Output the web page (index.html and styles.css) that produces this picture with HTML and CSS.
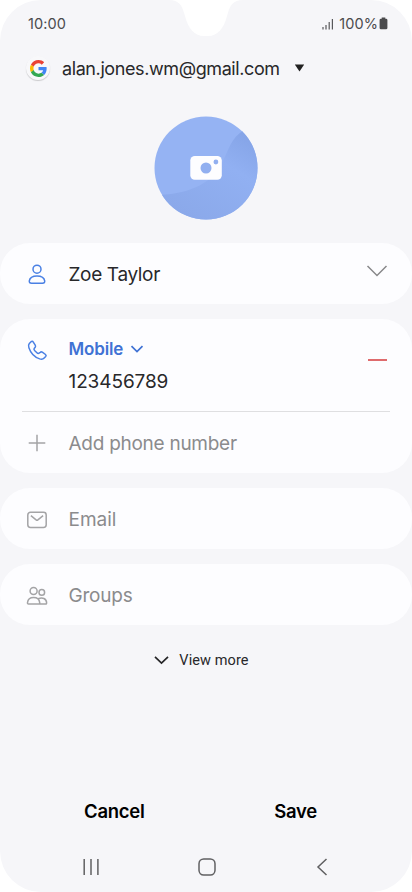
FILE: index.html
```
<!DOCTYPE html>
<html lang="en">
<head>
    <meta charset="UTF-8">
    <meta name="viewport" content="width=device-width, initial-scale=1.0">
    <title>Edit contact</title>
    <link rel="stylesheet" href="styles.css">
</head>
<body>
    <div class="screen">
        <svg class="notch" width="80" height="38" viewBox="0 0 80 38">
            <path d="M3 0C13 0 16 5 19 16C22 28 28 36 38 36H42C52 36 58 28 61 16C64 5 67 0 77 0Z" fill="#fff"/>
        </svg>

        <header class="status-bar">
            <span class="time">10:00</span>
            <div class="status-right">
                <svg width="12" height="12" viewBox="0 0 12 12" stroke="#58585a" stroke-width="1.2">
                    <path d="M1 9V11.5M4 7V11.5M7.2 4V11.5M10.4 1V11.5"/>
                </svg>
                <span class="percent">100%</span>
                <svg width="9" height="13" viewBox="0 0 9 13" fill="#4b4b4d">
                    <path d="M2.7 0.5h3.6v1.2h.7a1.4 1.4 0 0 1 1.4 1.4v7.8a1.4 1.4 0 0 1-1.4 1.4H2A1.4 1.4 0 0 1 .6 10.9V3.1A1.4 1.4 0 0 1 2 1.700h.7z"/>
                </svg>
            </div>
        </header>

        <div class="account">
            <span class="google">
                <svg width="17" height="17" viewBox="0 0 48 48">
                    <path fill="#ea4335" d="M24 9.500c3.540 0 6.710 1.220 9.210 3.600l6.850-6.850C35.900 2.380 30.470 0 24 0 14.620 0 6.510 5.380 2.560 13.220l7.980 6.190C12.430 13.720 17.740 9.500 24 9.500z"/>
                    <path fill="#4285f4" d="M46.980 24.550c0-1.570-.15-3.090-.38-4.550H24v9.020h12.940c-.58 2.960-2.260 5.480-4.780 7.180l7.730 6c4.510-4.180 7.090-10.360 7.090-17.650z"/>
                    <path fill="#fbbc05" d="M10.530 28.590A14.500 14.500 0 0 1 9.770 24c0-1.600.27-3.140.76-4.590l-7.980-6.190A24 24 0 0 0 0 24c0 3.880.92 7.540 2.560 10.780z"/>
                    <path fill="#34a853" d="M24 48c6.480 0 11.930-2.130 15.890-5.810l-7.730-6c-2.150 1.450-4.920 2.300-8.160 2.300-6.260 0-11.570-4.220-13.470-9.910l-7.980 6.190C6.510 42.620 14.620 48 24 48z"/>
                </svg>
            </span>
            <span class="email">alan.jones.wm@gmail.com</span>
            <svg width="11" height="8" viewBox="0 0 11 8"><path d="M.8.5H10.200L5.500 7.500z" fill="#222"/></svg>
        </div>

        <div class="photo">
            <svg width="104" height="104" viewBox="0 0 104 104">
                <defs>
                    <clipPath id="round"><circle cx="52" cy="52" r="51.500"/></clipPath>
                    <linearGradient id="wave" x1="1" y1="0" x2=".4" y2="1">
                        <stop offset="0" stop-color="#86a5e8"/>
                        <stop offset=".2" stop-color="#86a5e8"/>
                        <stop offset=".48" stop-color="#91b0f2"/>
                        <stop offset="1" stop-color="#8ba9ea"/>
                    </linearGradient>
                </defs>
                <g clip-path="url(#round)">
                    <rect width="104" height="104" fill="#95b3f3"/>
                    <path d="M0 79C32 79 57 69 68 47C75 33 77 22 90 14L104 0V104H0Z" fill="url(#wave)"/>
                </g>
                <rect x="36.300" y="40" width="31.500" height="23.700" rx="4.500" fill="#fdfdff"/>
                <circle cx="52" cy="52" r="5.500" fill="#91aff0"/>
                <circle cx="61.900" cy="46" r="2.400" fill="#91aff0"/>
            </svg>
        </div>

        <main class="cards">
            <section class="card row">
                <svg class="icon blue" viewBox="0 0 24 24">
                    <circle cx="12" cy="7.200" r="4"/>
                    <path d="M6.500 21.200Q4 21.200 4.300 18.900C4.900 15.300 8 14 12 14S19.100 15.300 19.700 18.900Q20 21.200 17.500 21.200Z"/>
                </svg>
                <span class="value name">Zoe Taylor</span>
                <svg class="expand" width="22" height="14" viewBox="0 0 22 14"><path d="M1.500 2L11 11.500L20.500 2" fill="none" stroke="#88888a" stroke-width="1.500"/></svg>
            </section>

            <section class="card phone-card">
                <div class="phone">
                    <svg class="icon blue" viewBox="0 0 24 24">
                        <path d="M6.100 3.700L4.300 5.500Q3 7 3.900 9.700C5.800 15.400 9.700 19.200 14.700 20.900Q17.600 21.700 19.200 20L20.700 18.500Q21.600 17.500 20.500 16.500L17.300 14.200Q16.200 13.500 15.200 14.300L13.700 15.400Q12.800 15.700 11.900 14.800L9.600 12.400Q8.600 11.300 9.200 10.400L10.200 9.200Q10.900 8.200 10.200 7.100L8.300 4.100Q7.300 2.700 6.100 3.700Z"/>
                    </svg>
                    <div class="phone-info">
                        <div class="label"><span>Mobile</span><svg width="14" height="10" viewBox="0 0 14 10"><path d="M1.500 2.200L7 7.600L12.500 2.200" fill="none" stroke="#3f72d4" stroke-width="1.700"/></svg></div>
                        <div class="value number">123456789</div>
                    </div>
                    <span class="minus"></span>
                </div>
                <div class="row add">
                    <svg class="icon gray" viewBox="0 0 24 24"><path d="M12 3.700V20.300M3.700 12H20.300"/></svg>
                    <span class="value muted add-text">Add phone number</span>
                </div>
            </section>

            <section class="card row">
                <svg class="icon gray" viewBox="0 0 24 24">
                    <rect x="2.800" y="5.300" width="18.400" height="15.200" rx="2.700"/>
                    <path d="M5.900 8.700L11.100 12.800Q12 13.500 12.900 12.800L18.100 8.700"/>
                </svg>
                <span class="value muted email-text">Email</span>
            </section>

            <section class="card row">
                <svg class="icon gray" viewBox="0 0 24 24">
                    <circle cx="8.600" cy="8" r="3.500"/>
                    <circle cx="16.800" cy="9.400" r="2.800"/>
                    <path d="M3.500 21Q2.300 21 2.500 19.600C2.900 15.900 5.200 14.500 8.600 14.500S14.300 15.900 14.700 19.600Q14.900 21 13.700 21ZM13.300 15.700C17.400 13.900 21.500 15.500 21.600 19.700Q21.700 21 20.600 21H13.700"/>
                </svg>
                <span class="value muted groups-text">Groups</span>
            </section>
        </main>

        <div class="view-more">
            <svg width="15" height="10" viewBox="0 0 15 10"><path d="M1 1.800L7.500 8L14 1.800" fill="none" stroke="#252527" stroke-width="1.700"/></svg>
            <span>View more</span>
        </div>

        <div class="actions">
            <span>Cancel</span>
            <span>Save</span>
        </div>

        <nav class="nav-bar">
            <svg width="18" height="18" viewBox="0 0 18 18"><path d="M2.200 1V17M9 1V17M15.900 1V17"/></svg>
            <svg width="18" height="18" viewBox="0 0 18 18"><rect x="1" y="1" width="16" height="16" rx="4.700"/></svg>
            <svg width="18" height="18" viewBox="0 0 18 18"><path d="M13.500 1L5 9L13.500 17"/></svg>
        </nav>
    </div>
</body>
</html>
```
FILE: styles.css
```
* {
    box-sizing: border-box;
}

body {
    margin: 0;
    background-color: #fff;
    font-family: Inter, Roboto, sans-serif;
    color: #28282a;
}

svg {
    display: block;
    flex-shrink: 0;
}

.screen {
    position: relative;
    display: flex;
    flex-direction: column;
    width: 412px;
    height: 892px;
    background-color: #f6f6f9;
    border-radius: 41px;
    overflow: hidden;
}

.notch {
    position: absolute;
    top: 0;
    left: 166px;
}

.status-bar {
    display: flex;
    justify-content: space-between;
    align-items: center;
    height: 47px;
    padding: 0 24px 0 28px;
    font-size: 14.5px;
    color: #4b4b4d;
}

.time {
    letter-spacing: 0.1px;
}

.status-right {
    display: flex;
    align-items: center;
}

.percent {
    margin: 0 1px 0 5px;
    letter-spacing: 0.1px;
}

.account {
    display: flex;
    align-items: center;
    height: 42px;
    padding-left: 26px;
}

.google {
    display: flex;
    align-items: center;
    justify-content: center;
    width: 24px;
    height: 24px;
    margin-right: 12px;
    border-radius: 50%;
    background-color: #f8f8fa;
    box-shadow: 0 1px 1px rgba(0, 0, 0, 0.18);
}

.email {
    margin-right: 14px;
    font-size: 18px;
    letter-spacing: -0.4px;
}

.photo {
    display: flex;
    justify-content: center;
    padding: 27px 0 23px;
}

.cards {
    display: flex;
    flex-direction: column;
    gap: 15px;
}

.card {
    background-color: #fdfdff;
    border-radius: 30px;
}

.row {
    display: flex;
    align-items: center;
    height: 61px;
    padding: 0 24px 0 24.5px;
}

.icon {
    width: 24px;
    height: 24px;
    margin-right: 20px;
    fill: none;
    stroke-width: 1.5;
}

.blue {
    stroke: #4a80e4;
}

.gray {
    stroke: #a4a4a6;
}

.value {
    padding-top: 2px;
    font-size: 19px;
}

.muted {
    color: #8b8b8d;
}

.name {
    letter-spacing: -0.35px;
}

.add-text {
    letter-spacing: -0.27px;
}

.groups-text {
    letter-spacing: -0.2px;
}

.expand {
    margin: -6px 0 0 auto;
}

.phone-card {
    height: 154px;
}

.phone {
    display: flex;
    align-items: flex-start;
    height: 93px;
    margin: 0 22px;
    padding: 19px 2px 0 2.5px;
    border-bottom: 1px solid #dfdfe1;
}

.label {
    display: flex;
    align-items: center;
    gap: 7px;
    height: 21px;
    font-size: 17px;
    font-weight: 600;
    letter-spacing: -0.15px;
    color: #3f72d4;
}

.number {
    margin-top: 9px;
    line-height: 24px;
    letter-spacing: -0.1px;
}

.minus {
    width: 19px;
    height: 2px;
    margin: 21px 1px 0 auto;
    background-color: #df6b6d;
}

.add {
    height: 61px;
}

.view-more {
    display: flex;
    align-items: center;
    justify-content: center;
    gap: 10px;
    height: 70px;
    padding-right: 9px;
    font-family: Roboto, sans-serif;
    font-size: 14.5px;
    letter-spacing: 0.1px;
}

.actions {
    display: flex;
    justify-content: space-between;
    align-items: center;
    height: 50px;
    margin-top: auto;
    padding: 0 95px 0 84px;
    font-size: 18.5px;
    font-weight: 600;
    letter-spacing: -0.25px;
    color: #000;
}

.nav-bar {
    display: flex;
    justify-content: space-between;
    height: 56px;
    padding: 22px 81px 0 82px;
    fill: none;
    stroke: #606062;
    stroke-width: 1.5;
}
```
